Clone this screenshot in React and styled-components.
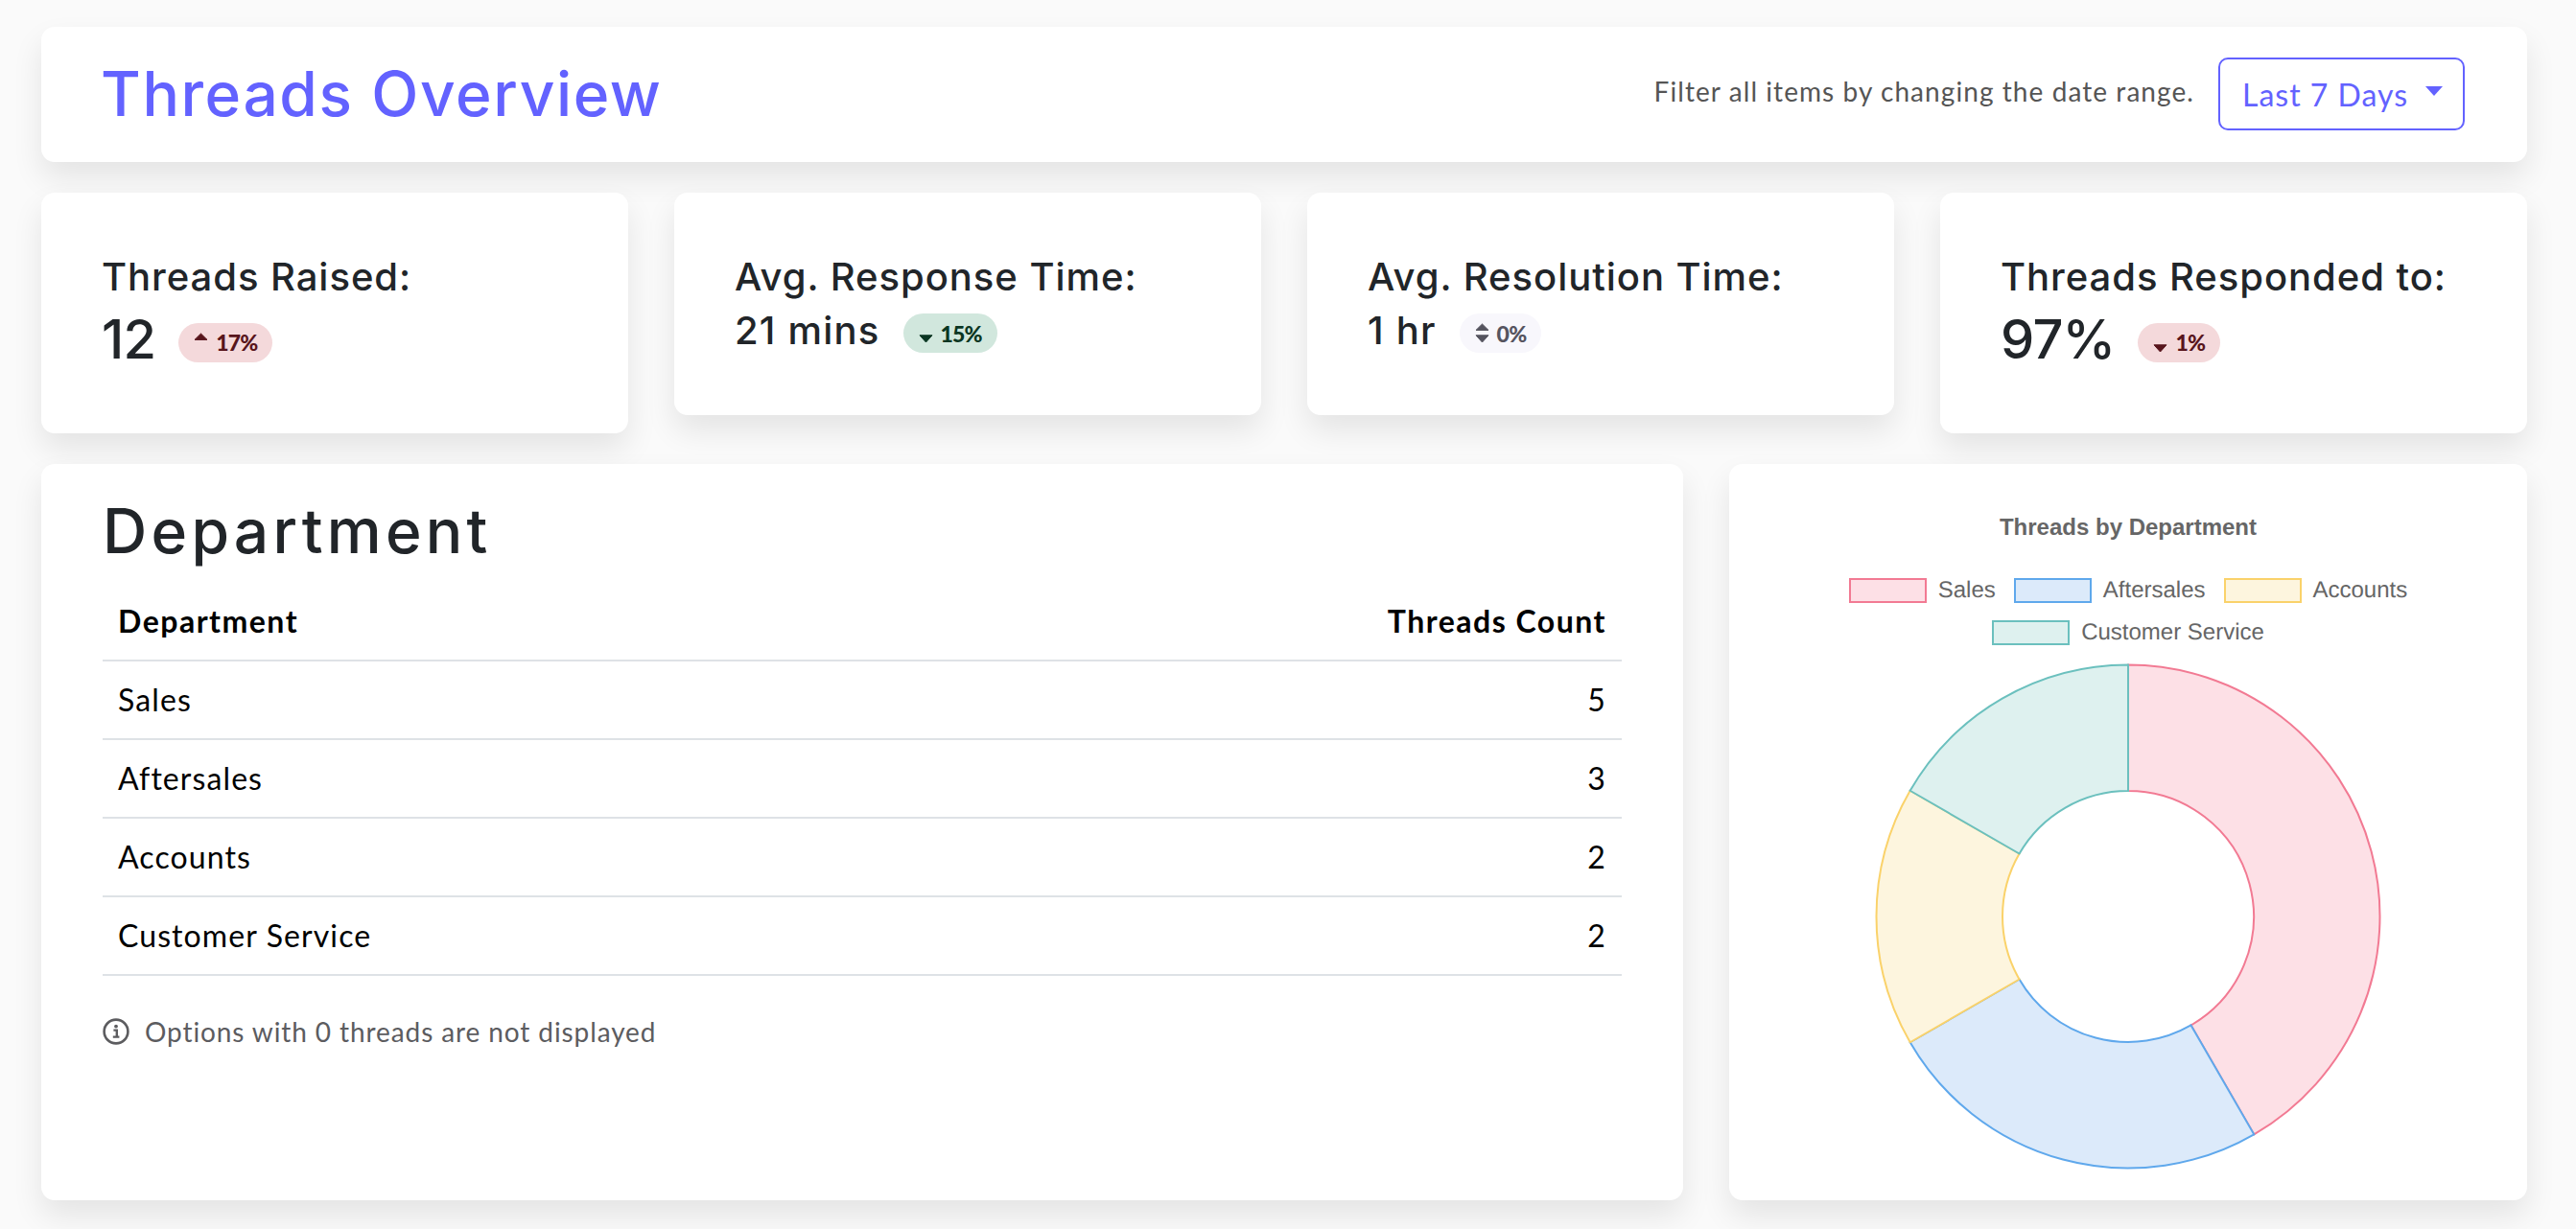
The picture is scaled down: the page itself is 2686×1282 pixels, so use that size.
import React from "react";
import styled, { createGlobalStyle } from "styled-components";

const GlobalStyle = createGlobalStyle`
  html, body {
    margin: 0;
    padding: 0;
    background: #fafafa;
    color: #212529;
    font-family: "Lato", "Open Sans", sans-serif;
  }
`;

const departments = [
  { name: "Sales", count: 5, stroke: "#f27a93", fill: "#fde0e6" },
  { name: "Aftersales", count: 3, stroke: "#5fa8ec", fill: "#dceafa" },
  { name: "Accounts", count: 2, stroke: "#fad26a", fill: "#fdf5de" },
  { name: "Customer Service", count: 2, stroke: "#6bc0be", fill: "#def1ef" },
];

const stats = [
  { label: "Threads Raised:", value: "12", big: true, change: "17%", tone: "bad", dir: "up" },
  { label: "Avg. Response Time:", value: "21 mins", change: "15%", tone: "good", dir: "down" },
  { label: "Avg. Resolution Time:", value: "1 hr", change: "0%", tone: "flat", dir: "both" },
  { label: "Threads Responded to:", value: "97%", big: true, change: "1%", tone: "bad", dir: "down" },
];

const tones = {
  bad: { bg: "#f4d9db", fg: "#58151c" },
  good: { bg: "#d1e7dd", fg: "#0a3622" },
  flat: { bg: "#f8f7fc", fg: "#55545f" },
};

const Caret = ({ dir }) => (
  <CaretSvg viewBox="0 0 15 21">
    {dir !== "down" && <path d="M1 7.4 L7.5 1 L14 7.4 Z" />}
    {dir !== "up" && <path d="M1 12.8 L14 12.8 L7.5 20 Z" />}
  </CaretSvg>
);

const InfoIcon = () => (
  <NoteIcon viewBox="0 0 28 28">
    <circle cx="14" cy="14" r="12.4" fill="none" stroke="#5c5c5f" strokeWidth="2.6" />
    <circle cx="14" cy="8.6" r="1.9" fill="#5c5c5f" />
    <path d="M11.4 12.6 H14.8 V19 M10.8 19.6 H17.4" fill="none" stroke="#5c5c5f" strokeWidth="2.4" />
  </NoteIcon>
);

const point = (r, a) => {
  const rad = ((a - 90) * Math.PI) / 180;
  return `${(266 + r * Math.cos(rad)).toFixed(2)} ${(266 + r * Math.sin(rad)).toFixed(2)}`;
};

const slicePath = (start, end, outer, inner) => {
  const large = end - start > 180 ? 1 : 0;
  return [
    `M${point(outer, start)}`,
    `A${outer} ${outer} 0 ${large} 1 ${point(outer, end)}`,
    `L${point(inner, end)}`,
    `A${inner} ${inner} 0 ${large} 0 ${point(inner, start)}`,
    "Z",
  ].join(" ");
};

const Donut = () => {
  const total = departments.reduce((sum, d) => sum + d.count, 0);
  let angle = 0;
  return (
    <DonutSvg viewBox="0 0 532 532">
      {departments.map((d) => {
        const start = angle;
        angle += (d.count / total) * 360;
        return (
          <path
            key={d.name}
            d={slicePath(start, angle, 262.5, 131)}
            fill={d.fill}
            stroke={d.stroke}
            strokeWidth="2"
          />
        );
      })}
    </DonutSvg>
  );
};

const App = () => {
  return (
    <Page>
      <GlobalStyle />
      <TopBar>
        <Title>Threads Overview</Title>
        <FilterGroup>
          <FilterHint>Filter all items by changing the date range.</FilterHint>
          <RangeButton>
            Last 7 Days
            <ButtonCaret />
          </RangeButton>
        </FilterGroup>
      </TopBar>

      <StatsRow>
        {stats.map((s) => (
          <StatCard key={s.label}>
            <StatLabel>{s.label}</StatLabel>
            <StatValueRow>
              <StatValue $big={s.big}>{s.value}</StatValue>
              <ChangePill $tone={s.tone}>
                <Caret dir={s.dir} />
                {s.change}
              </ChangePill>
            </StatValueRow>
          </StatCard>
        ))}
      </StatsRow>

      <BottomRow>
        <DepartmentCard>
          <SectionTitle>Department</SectionTitle>
          <Table>
            <thead>
              <tr>
                <HeadCell>Department</HeadCell>
                <HeadCell $right>Threads Count</HeadCell>
              </tr>
            </thead>
            <tbody>
              {departments.map((d) => (
                <tr key={d.name}>
                  <Cell>{d.name}</Cell>
                  <Cell $right>{d.count}</Cell>
                </tr>
              ))}
            </tbody>
          </Table>
          <Note>
            <InfoIcon />
            Options with 0 threads are not displayed
          </Note>
        </DepartmentCard>

        <ChartCard>
          <ChartTitle>Threads by Department</ChartTitle>
          <Legend>
            {departments.map((d) => (
              <LegendItem key={d.name}>
                <LegendBox $fill={d.fill} $stroke={d.stroke} />
                {d.name}
              </LegendItem>
            ))}
          </Legend>
          <Donut />
        </ChartCard>
      </BottomRow>
    </Page>
  );
};

export default App;

const Page = styled.div`
  box-sizing: border-box;
  height: 1282px;
  overflow: hidden;
  padding: 28px 51px 0 43px;
  display: flex;
  flex-direction: column;
  gap: 32px;
`;

const Card = styled.div`
  box-sizing: border-box;
  background: #fff;
  border-radius: 14px;
  box-shadow: 0 16px 32px rgba(0, 0, 0, 0.09);
`;

const TopBar = styled(Card)`
  display: flex;
  align-items: center;
  justify-content: space-between;
  padding: 32px 65px 33px 62px;
`;

const Title = styled.h1`
  margin: 0;
  font-family: "Inter", sans-serif;
  font-size: 64px;
  line-height: 76px;
  font-weight: 500;
  letter-spacing: 1.6px;
  color: #6362ff;
`;

const FilterGroup = styled.div`
  display: flex;
  align-items: center;
  gap: 25px;
`;

const FilterHint = styled.span`
  margin-bottom: 6px;
  font-size: 28px;
  letter-spacing: 1.07px;
  color: #555;
`;

const RangeButton = styled.button`
  box-sizing: border-box;
  display: flex;
  align-items: center;
  gap: 18px;
  height: 76px;
  width: 257px;
  padding: 0 24px 0 23px;
  border: 2px solid #6362ff;
  border-radius: 10px;
  background: #fff;
  color: #6362ff;
  font-family: inherit;
  font-size: 32px;
  letter-spacing: 1px;
  white-space: nowrap;
`;

const ButtonCaret = styled.span`
  width: 0;
  height: 0;
  margin-top: -6px;
  border-left: 9px solid transparent;
  border-right: 9px solid transparent;
  border-top: 10px solid #6362ff;
`;

const StatsRow = styled.div`
  display: grid;
  grid-template-columns: repeat(4, 612px);
  gap: 48px;
  align-items: start;
`;

const StatCard = styled(Card)`
  padding: 64px 64px 64px 63px;
`;

const StatLabel = styled.div`
  margin-bottom: 8px;
  font-family: "Inter", sans-serif;
  font-size: 40px;
  line-height: 48px;
  font-weight: 500;
  letter-spacing: 0.95px;
  white-space: nowrap;
`;

const StatValueRow = styled.div`
  display: flex;
  align-items: center;
  gap: 24px;
`;

const StatValue = styled.div`
  font-family: "Inter", sans-serif;
  font-size: ${(p) => (p.$big ? "56px" : "40px")};
  line-height: ${(p) => (p.$big ? "67px" : "48px")};
  font-weight: 500;
  letter-spacing: ${(p) => (p.$big ? "-0.8px" : "1.2px")};
`;

const ChangePill = styled.span`
  display: flex;
  align-items: center;
  gap: 8px;
  height: 41px;
  margin-top: 5px;
  padding: 0 16px;
  border-radius: 21px;
  font-size: 23px;
  font-weight: 900;
  letter-spacing: -0.8px;
  background: ${(p) => tones[p.$tone].bg};
  color: ${(p) => tones[p.$tone].fg};
`;

const CaretSvg = styled.svg`
  width: 15px;
  height: 21px;
  flex: none;
  fill: currentColor;
  stroke: currentColor;
  stroke-width: 1;
  stroke-linejoin: round;
`;

const BottomRow = styled.div`
  display: grid;
  grid-template-columns: 1712px 832px;
  grid-template-rows: 768px;
  gap: 48px;
`;

const DepartmentCard = styled(Card)`
  padding: 32px 64px;
`;

const SectionTitle = styled.h2`
  margin: 0 0 16px;
  font-family: "Inter", sans-serif;
  font-size: 64px;
  line-height: 76px;
  font-weight: 500;
  letter-spacing: 4.3px;
`;

const Table = styled.table`
  width: 100%;
  border-collapse: collapse;
  color: #000;
  font-size: 32px;
`;

const HeadCell = styled.th`
  padding: 16px;
  line-height: 48px;
  font-weight: 700;
  letter-spacing: 1.5px;
  text-align: ${(p) => (p.$right ? "right" : "left")};
  border-bottom: 2px solid #dee2e6;
`;

const Cell = styled.td`
  padding: 16px;
  line-height: 48px;
  letter-spacing: 1.1px;
  text-align: ${(p) => (p.$right ? "right" : "left")};
  border-bottom: 2px solid #dee2e6;
`;

const Note = styled.div`
  display: flex;
  align-items: center;
  gap: 16px;
  margin-top: 37px;
  font-size: 28px;
  line-height: 42px;
  letter-spacing: 0.9px;
  color: #5c5c5f;
`;

const NoteIcon = styled.svg`
  width: 28px;
  height: 28px;
  flex: none;
`;

const ChartCard = styled(Card)`
  display: flex;
  flex-direction: column;
  align-items: center;
  padding: 52px 32px 0;
`;

const ChartTitle = styled.div`
  margin-bottom: 30px;
  font-family: "Liberation Sans", Arial, sans-serif;
  font-size: 24px;
  line-height: 28px;
  font-weight: 700;
  color: #666;
`;

const Legend = styled.div`
  display: flex;
  flex-wrap: wrap;
  justify-content: center;
  column-gap: 19px;
  font-family: "Liberation Sans", Arial, sans-serif;
  font-size: 24px;
  color: #666;
  text-rendering: geometricPrecision;
`;

const LegendItem = styled.div`
  display: flex;
  align-items: center;
  gap: 12px;
  height: 44px;
`;

const LegendBox = styled.span`
  box-sizing: border-box;
  width: 81px;
  height: 26px;
  border: 2px solid ${(p) => p.$stroke};
  background: ${(p) => p.$fill};
`;

const DonutSvg = styled.svg`
  width: 532px;
  height: 532px;
  margin-top: 8px;
  flex: none;
`;
